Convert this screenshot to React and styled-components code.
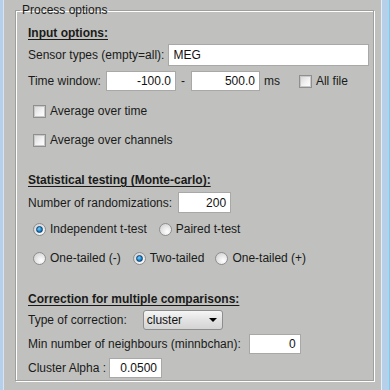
import React from "react";
import styled, { createGlobalStyle } from "styled-components";

const Global = createGlobalStyle`
  html, body { margin: 0; padding: 0; background: #c0c1be; }
  body { font-family: "Liberation Sans", Arial, sans-serif; font-size: 12px; color: #1a1a1a; }
  * { box-sizing: border-box; }
`;

const Window = styled.div`
  width: 390px;
  height: 390px;
  display: flex;
  background: #c0c1be;
  overflow: hidden;
`;

const EdgeLeft = styled.div`
  width: 4px;
  background: #b6d0ea;
  border-right: 1px solid #d7e5f3;
`;

const EdgeRight = styled.div`
  width: 9px;
  background: #b6d0ea;
  border-left: 1px solid #e4eef8;
  border-right: 1px solid #6fd0ef;
`;

const Main = styled.div`
  flex: 1;
  display: flex;
  flex-direction: column;
  padding: 3px 7px 0 11px;
`;

const Group = styled.fieldset`
  margin: 0;
  padding: 0 0 0 12px;
  height: 378px;
  border: 1px solid #9fa09d;
  box-shadow: inset 1px 1px 0 #ffffff, 1px 1px 0 #ffffff;
  display: flex;
  flex-direction: column;
  min-width: 0;
`;

const Legend = styled.legend`
  margin-left: -8px;
  padding: 0 2px;
  line-height: 14px;
  font-size: 12px;
`;

const Row = styled.div`
  display: flex;
  align-items: center;
  height: ${(p) => p.$h || 20}px;
  margin-top: ${(p) => p.$mt || 0}px;
  padding-left: ${(p) => p.$indent || 0}px;
  white-space: nowrap;
`;

const Heading = styled.div`
  font-weight: bold;
  text-decoration: underline;
  text-underline-offset: 2px;
  height: 20px;
  line-height: 20px;
  margin-top: ${(p) => p.$mt || 0}px;
  white-space: nowrap;
`;

const Label = styled.span`
  margin-right: ${(p) => p.$mr ?? 5}px;
  margin-left: ${(p) => p.$ml || 0}px;
`;

const Field = styled.div`
  width: ${(p) => p.$w}px;
  height: ${(p) => p.$h || 20}px;
  background: #fff;
  border: 1px solid #a8a9a7;
  display: flex;
  align-items: center;
  justify-content: ${(p) => (p.$right ? "flex-end" : "flex-start")};
  padding: 0 4px;
  font-size: 12px;
  color: #111;
`;

const Box = styled.span`
  width: 13px;
  height: 13px;
  border: 1px solid #8e8f8f;
  background: linear-gradient(135deg, #d6d6d6 0%, #f4f4f4 60%, #ffffff 100%);
  box-shadow: inset 0 0 0 1px #c9c9c9;
  margin-right: 4px;
  margin-left: ${(p) => p.$ml || 0}px;
  flex: none;
`;

const Radio = styled.span`
  width: 13px;
  height: 13px;
  border-radius: 50%;
  border: 1px solid #8d8e8e;
  background: radial-gradient(circle at 65% 70%, #ffffff 0%, #e8e8e8 45%, #c9c9c9 100%);
  margin-right: 4px;
  margin-left: ${(p) => p.$ml || 0}px;
  flex: none;
  display: flex;
  align-items: center;
  justify-content: center;
  &::after {
    content: "";
    display: ${(p) => (p.$on ? "block" : "none")};
    width: 7px;
    height: 7px;
    border-radius: 50%;
    background: radial-gradient(circle at 40% 35%, #7fd0ff 0%, #1b86cf 55%, #0b4f86 100%);
    border: 1px solid #0d3e6a;
    box-sizing: border-box;
  }
`;

const Select = styled.div`
  width: 80px;
  height: 20px;
  margin-left: ${(p) => p.$ml || 0}px;
  border: 1px solid #8c8d8d;
  border-radius: 3px;
  background: linear-gradient(#f6f6f6, #e2e2e2 50%, #d4d4d4);
  display: flex;
  align-items: center;
  justify-content: space-between;
  padding: 0 5px 0 3px;
  color: #111;
`;

const Arrow = styled.span`
  width: 0;
  height: 0;
  border-left: 4px solid transparent;
  border-right: 4px solid transparent;
  border-top: 4px solid #000;
`;

export default function App() {
  return (
    <Window>
      <Global />
      <EdgeLeft />
      <Main>
        <Group>
          <Legend>Process options</Legend>
          <Heading $mt={6}>Input options:</Heading>
          <Row $h={22} $mt={1}>
            <Label $mr={4}>Sensor types (empty=all):</Label>
            <Field $w={201} $h={22}>MEG</Field>
          </Row>
          <Row $h={20} $mt={5}>
            <Label>Time window:</Label>
            <Field $w={70} $right>-100.0</Field>
            <Label $ml={5} $mr={6}>-</Label>
            <Field $w={69} $right>500.0</Field>
            <Label $ml={4} $mr={0}>ms</Label>
            <Box $ml={19} />
            <span>All file</span>
          </Row>
          <Row $mt={10} $indent={5}>
            <Box />
            <span>Average over time</span>
          </Row>
          <Row $mt={9} $indent={5}>
            <Box />
            <span>Average over channels</span>
          </Row>
          <Heading $mt={20}>Statistical testing (Monte-carlo):</Heading>
          <Row $h={21} $mt={2}>
            <Label $mr={6}>Number of randomizations:</Label>
            <Field $w={53} $h={21} $right>200</Field>
          </Row>
          <Row $mt={6} $indent={5}>
            <Radio $on />
            <span>Independent t-test</span>
            <Radio $ml={12} />
            <span>Paired t-test</span>
          </Row>
          <Row $mt={9} $indent={5}>
            <Radio />
            <span>One-tailed (-)</span>
            <Radio $ml={12} $on />
            <span>Two-tailed</span>
            <Radio $ml={11} />
            <span>One-tailed (+)</span>
          </Row>
          <Heading $mt={21}>Correction for multiple comparisons:</Heading>
          <Row $mt={1}>
            <span>Type of correction:</span>
            <Select $ml={16}>
              <span>cluster</span>
              <Arrow />
            </Select>
          </Row>
          <Row $mt={4}>
            <Label $mr={8}>Min number of neighbours (minnbchan):</Label>
            <Field $w={52} $right>0</Field>
          </Row>
          <Row $mt={4}>
            <Label $mr={3}>Cluster Alpha :</Label>
            <Field $w={53} $right>0.0500</Field>
          </Row>
        </Group>
      </Main>
      <EdgeRight />
    </Window>
  );
}
